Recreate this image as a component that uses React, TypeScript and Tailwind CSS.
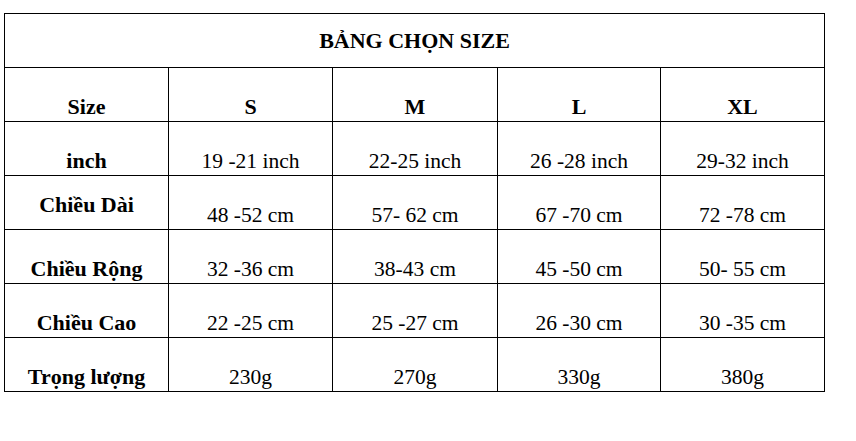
import React from 'react';

const sizes = ['S', 'M', 'L', 'XL'];

const rows: { label: string; values: string[]; high?: boolean }[] = [
  { label: 'inch', values: ['19 -21 inch', '22-25 inch', '26 -28 inch', '29-32 inch'] },
  { label: 'Chiều Dài', values: ['48 -52 cm', '57- 62 cm', '67 -70 cm', '72 -78 cm'], high: true },
  { label: 'Chiều Rộng', values: ['32 -36 cm', '38-43 cm', '45 -50 cm', '50- 55 cm'] },
  { label: 'Chiều Cao', values: ['22 -25 cm', '25 -27 cm', '26 -30 cm', '30 -35 cm'] },
  { label: 'Trọng lượng', values: ['230g', '270g', '330g', '380g'] },
];

// every cell draws its own right + bottom border, the grid draws left + top
const cell = 'h-[54px] border-r border-b border-black flex justify-center items-end pb-[2px]';
const head = `${cell} font-bold text-[22px]`;

export default function App() {
  return (
    <div className="w-[856px] h-[441px] bg-white text-black pt-[13px] pl-[4px] font-['Liberation_Serif','Times_New_Roman',serif]">
      <div className="grid grid-cols-[164px_164px_165px_163px_164px] w-fit border-l border-t border-black text-[21.5px] leading-[24px]">
        <div className="col-span-5 h-[54px] border-r border-b border-black flex items-center justify-center font-bold text-[22px]">
          BẢNG CHỌN SIZE
        </div>

        <div className={head}>Size</div>
        {sizes.map((s) => (
          <div key={s} className={head}>
            {s}
          </div>
        ))}

        {rows.map((row) => (
          <React.Fragment key={row.label}>
            <div
              className={
                row.high
                  ? 'h-[54px] border-r border-b border-black flex justify-center items-end pb-[12px] font-bold text-[22px]'
                  : head
              }
            >
              {row.label}
            </div>
            {row.values.map((v, i) => (
              <div key={i} className={cell}>
                {v}
              </div>
            ))}
          </React.Fragment>
        ))}
      </div>
    </div>
  );
}
